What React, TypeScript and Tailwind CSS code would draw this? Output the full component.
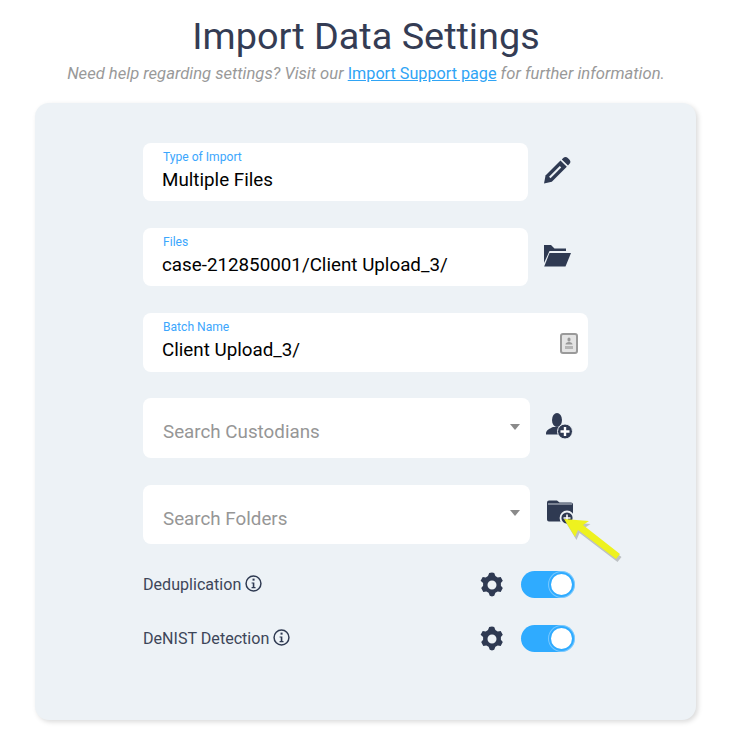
import React from "react";

const Pencil = () => (
  <svg width="28" height="28" viewBox="0 0 28 28">
    <path d="M1 27.500 2.500 19.500 17.500 4.500 23.800 10.800 8.800 25.800z" fill="#2f3a52" />
    <path d="M18.800 3.400 20.200 2a3.300 3.300 0 0 1 4.600 0l1.500 1.500a3.300 3.300 0 0 1 0 4.600L25 9.500z" fill="#2f3a52" />
    <path d="M6.800 21.500 17.500 10.800" stroke="#edf2f6" strokeWidth="2" />
  </svg>
);

const FolderOpen = () => (
  <svg width="28" height="24" viewBox="0 0 28 24" fill="#2f3a52">
    <path d="M1 1h7l3.500 3.500H23V7H6.500L1 19z" />
    <path d="M6.500 9H28l-5.500 13.500H1.200z" />
  </svg>
);

const UserPlus = () => (
  <svg width="28" height="28" viewBox="0 0 28 28">
    <ellipse cx="12" cy="8" rx="5" ry="7" fill="#2f3a52" />
    <path d="M1 21.500c0-3.500 4-5 7-6.500h7l3 2-4 5.500H1z" fill="#2f3a52" />
    <circle cx="20" cy="19.500" r="7.500" fill="#2f3a52" stroke="#edf2f6" strokeWidth="1" />
    <path d="M20 15v9M15.500 19.500h9" stroke="#fff" strokeWidth="2.400" />
  </svg>
);

const FolderPlus = () => (
  <svg width="30" height="26" viewBox="0 0 30 26">
    <path d="M1 3.500A2 2 0 0 1 3 1.500h8l2.500 2H25a2 2 0 0 1 2 2v15a2 2 0 0 1-2 2H3a2 2 0 0 1-2-2z" fill="#2f3a52" />
    <path d="M2 5h24" stroke="#edf2f6" strokeWidth="0.800" />
    <circle cx="21" cy="19" r="6.500" fill="#2f3a52" stroke="#edf2f6" strokeWidth="1.800" />
    <path d="M21 15.500v7M17.500 19h7" stroke="#fff" strokeWidth="1.600" />
  </svg>
);

const Gear = () => (
  <svg width="24" height="26" viewBox="0 0 24 26" fill="#2f3a52">
    <path fillRule="evenodd" d="M12 .5l2.200.6 1.200 3 2.300 1.300 3-.5 2.100 3.800-1.900 2.300v2.800l1.900 2.300-2.100 3.800-3-.5-2.300 1.300-1.200 3-2.200.8-2.200-.8-1.200-3-2.300-1.300-3 .5-2.100-3.800 1.900-2.300v-2.800L.6 8.700l2.100-3.800 3 .5L8 4.100l1.200-3zM12 8.500a4.500 4.500 0 1 0 0 9 4.500 4.500 0 0 0 0-9z" />
  </svg>
);

const Info = () => (
  <svg width="17" height="17" viewBox="0 0 16 16" fill="none">
    <circle cx="8" cy="8" r="7" stroke="#2f3a52" strokeWidth="1.400" />
    <rect x="7.100" y="3.400" width="1.900" height="1.900" fill="#2f3a52" />
    <path d="M6.200 7h2.600v4.300h1.100v1.100H6.200v-1.100h1.100V8.100H6.200z" fill="#2f3a52" />
  </svg>
);

const Badge = () => (
  <svg width="18" height="21" viewBox="0 0 18 21">
    <rect x="1" y="1" width="16" height="19" rx="2" fill="#e4e4e4" stroke="#9a9a9a" strokeWidth="2" />
    <rect x="7.500" y="4.500" width="3" height="4" rx="1.500" fill="#999" />
    <path d="M5.500 11.500c0-1.500 1.500-2.500 3.500-2.500s3.500 1 3.500 2.500z" fill="#999" />
    <rect x="5" y="13" width="8" height="3" fill="#b5b5b5" />
  </svg>
);

const Field = ({ label, value, width, h }: { label: string; value: string; width: string; h: string }) => (
  <div className={`flex flex-col rounded-lg bg-white pl-[19px] ${width} ${h}`}>
    <span className="mt-[7px] pl-px text-[12.1px] leading-[14px] text-[#3ba6fd]">{label}</span>
    <span className="mt-[4px] text-[18.8px] leading-6 text-black">{value}</span>
  </div>
);

const SearchSelect = ({ placeholder, h }: { placeholder: string; h: string }) => (
  <div className={`flex w-[387px] items-center justify-between rounded-lg bg-white pl-5 pr-[10px] ${h}`}>
    <span className="mt-[8px] text-[18.8px] leading-7 text-[#969696]">{placeholder}</span>
    <span className="mb-[3px] h-0 w-0 border-x-[5px] border-t-[6px] border-x-transparent border-t-[#8a8a8a]" />
  </div>
);

const Toggle = () => (
  <div className="flex h-[27px] w-[54px] items-center justify-end rounded-full bg-[#2fabff] pr-px">
    <span className="h-[25px] w-[25px] rounded-full border-2 border-[#2fabff] bg-white shadow-[0_0_0_1px_rgba(255,255,255,0.35)]" />
  </div>
);

const SwitchRow = ({ label }: { label: string }) => (
  <div className="flex h-[27px] w-[432px] items-center">
    <span className="text-[16.1px] leading-6 text-[#3d4659]">{label}</span>
    <span className="ml-[4px] mb-[2px]"><Info /></span>
    <span className="ml-auto mr-[17px] flex"><Gear /></span>
    <Toggle />
  </div>
);

export default function App() {
  return (
    <div className="h-[732px] w-[745px] overflow-hidden bg-white font-['Roboto',sans-serif]">
      <div className="flex w-[732px] flex-col items-center pt-[12px]">
        <h1 className="text-center text-[37.8px] leading-[48px] font-normal text-[#343c54]">Import Data Settings</h1>
        <p className="mt-[3px] text-center text-[16.6px] leading-[22px] text-[#999999] italic">
          Need help regarding settings? Visit our{" "}
          <a className="text-[16.2px] text-[#2fa4f5] not-italic underline">Import Support page</a> for further information.
        </p>
      </div>
      <div className="relative mt-[18px] ml-[35px] flex h-[617px] w-[661px] flex-col rounded-[14px] bg-[#edf2f6] pt-[40px] pl-[108px] shadow-[2px_2px_5px_rgba(0,0,0,0.15)]">
        <div className="flex items-center">
          <Field label="Type of Import" value="Multiple Files" width="w-[385px]" h="h-[58px]" />
          <span className="ml-[15px] mb-[4px] flex"><Pencil /></span>
        </div>
        <div className="mt-[27px] flex items-center">
          <Field label="Files" value="case-212850001/Client Upload_3/" width="w-[385px]" h="h-[58px]" />
          <span className="ml-[15px] mb-[3px] flex"><FolderOpen /></span>
        </div>
        <div className="relative mt-[27px] flex w-[445px]">
          <Field label="Batch Name" value="Client Upload_3/" width="w-[445px]" h="h-[59px]" />
          <span className="absolute top-[20px] right-[10px] flex"><Badge /></span>
        </div>
        <div className="mt-[26px] flex items-center">
          <SearchSelect placeholder="Search Custodians" h="h-[60px]" />
          <span className="ml-[15px] mb-[5px] flex"><UserPlus /></span>
        </div>
        <div className="mt-[27px] flex items-center">
          <SearchSelect placeholder="Search Folders" h="h-[59px]" />
          <span className="ml-[16px] mb-[5px] flex"><FolderPlus /></span>
        </div>
        <div className="mt-[27px] flex flex-col gap-[27px]">
          <SwitchRow label="Deduplication" />
          <SwitchRow label="DeNIST Detection" />
        </div>
        <svg className="absolute top-[410px] left-[524px]" width="70" height="50" viewBox="0 0 70 50">
          <path d="M5 6 16 24 19 17 57 46 61 41 24 12 30 8z" fill="#000" opacity="0.2" transform="translate(1.500 3)" />
          <path d="M5 6 16 24 19 17 57 46 61 41 24 12 30 8z" fill="#eef21f" />
        </svg>
      </div>
    </div>
  );
}
